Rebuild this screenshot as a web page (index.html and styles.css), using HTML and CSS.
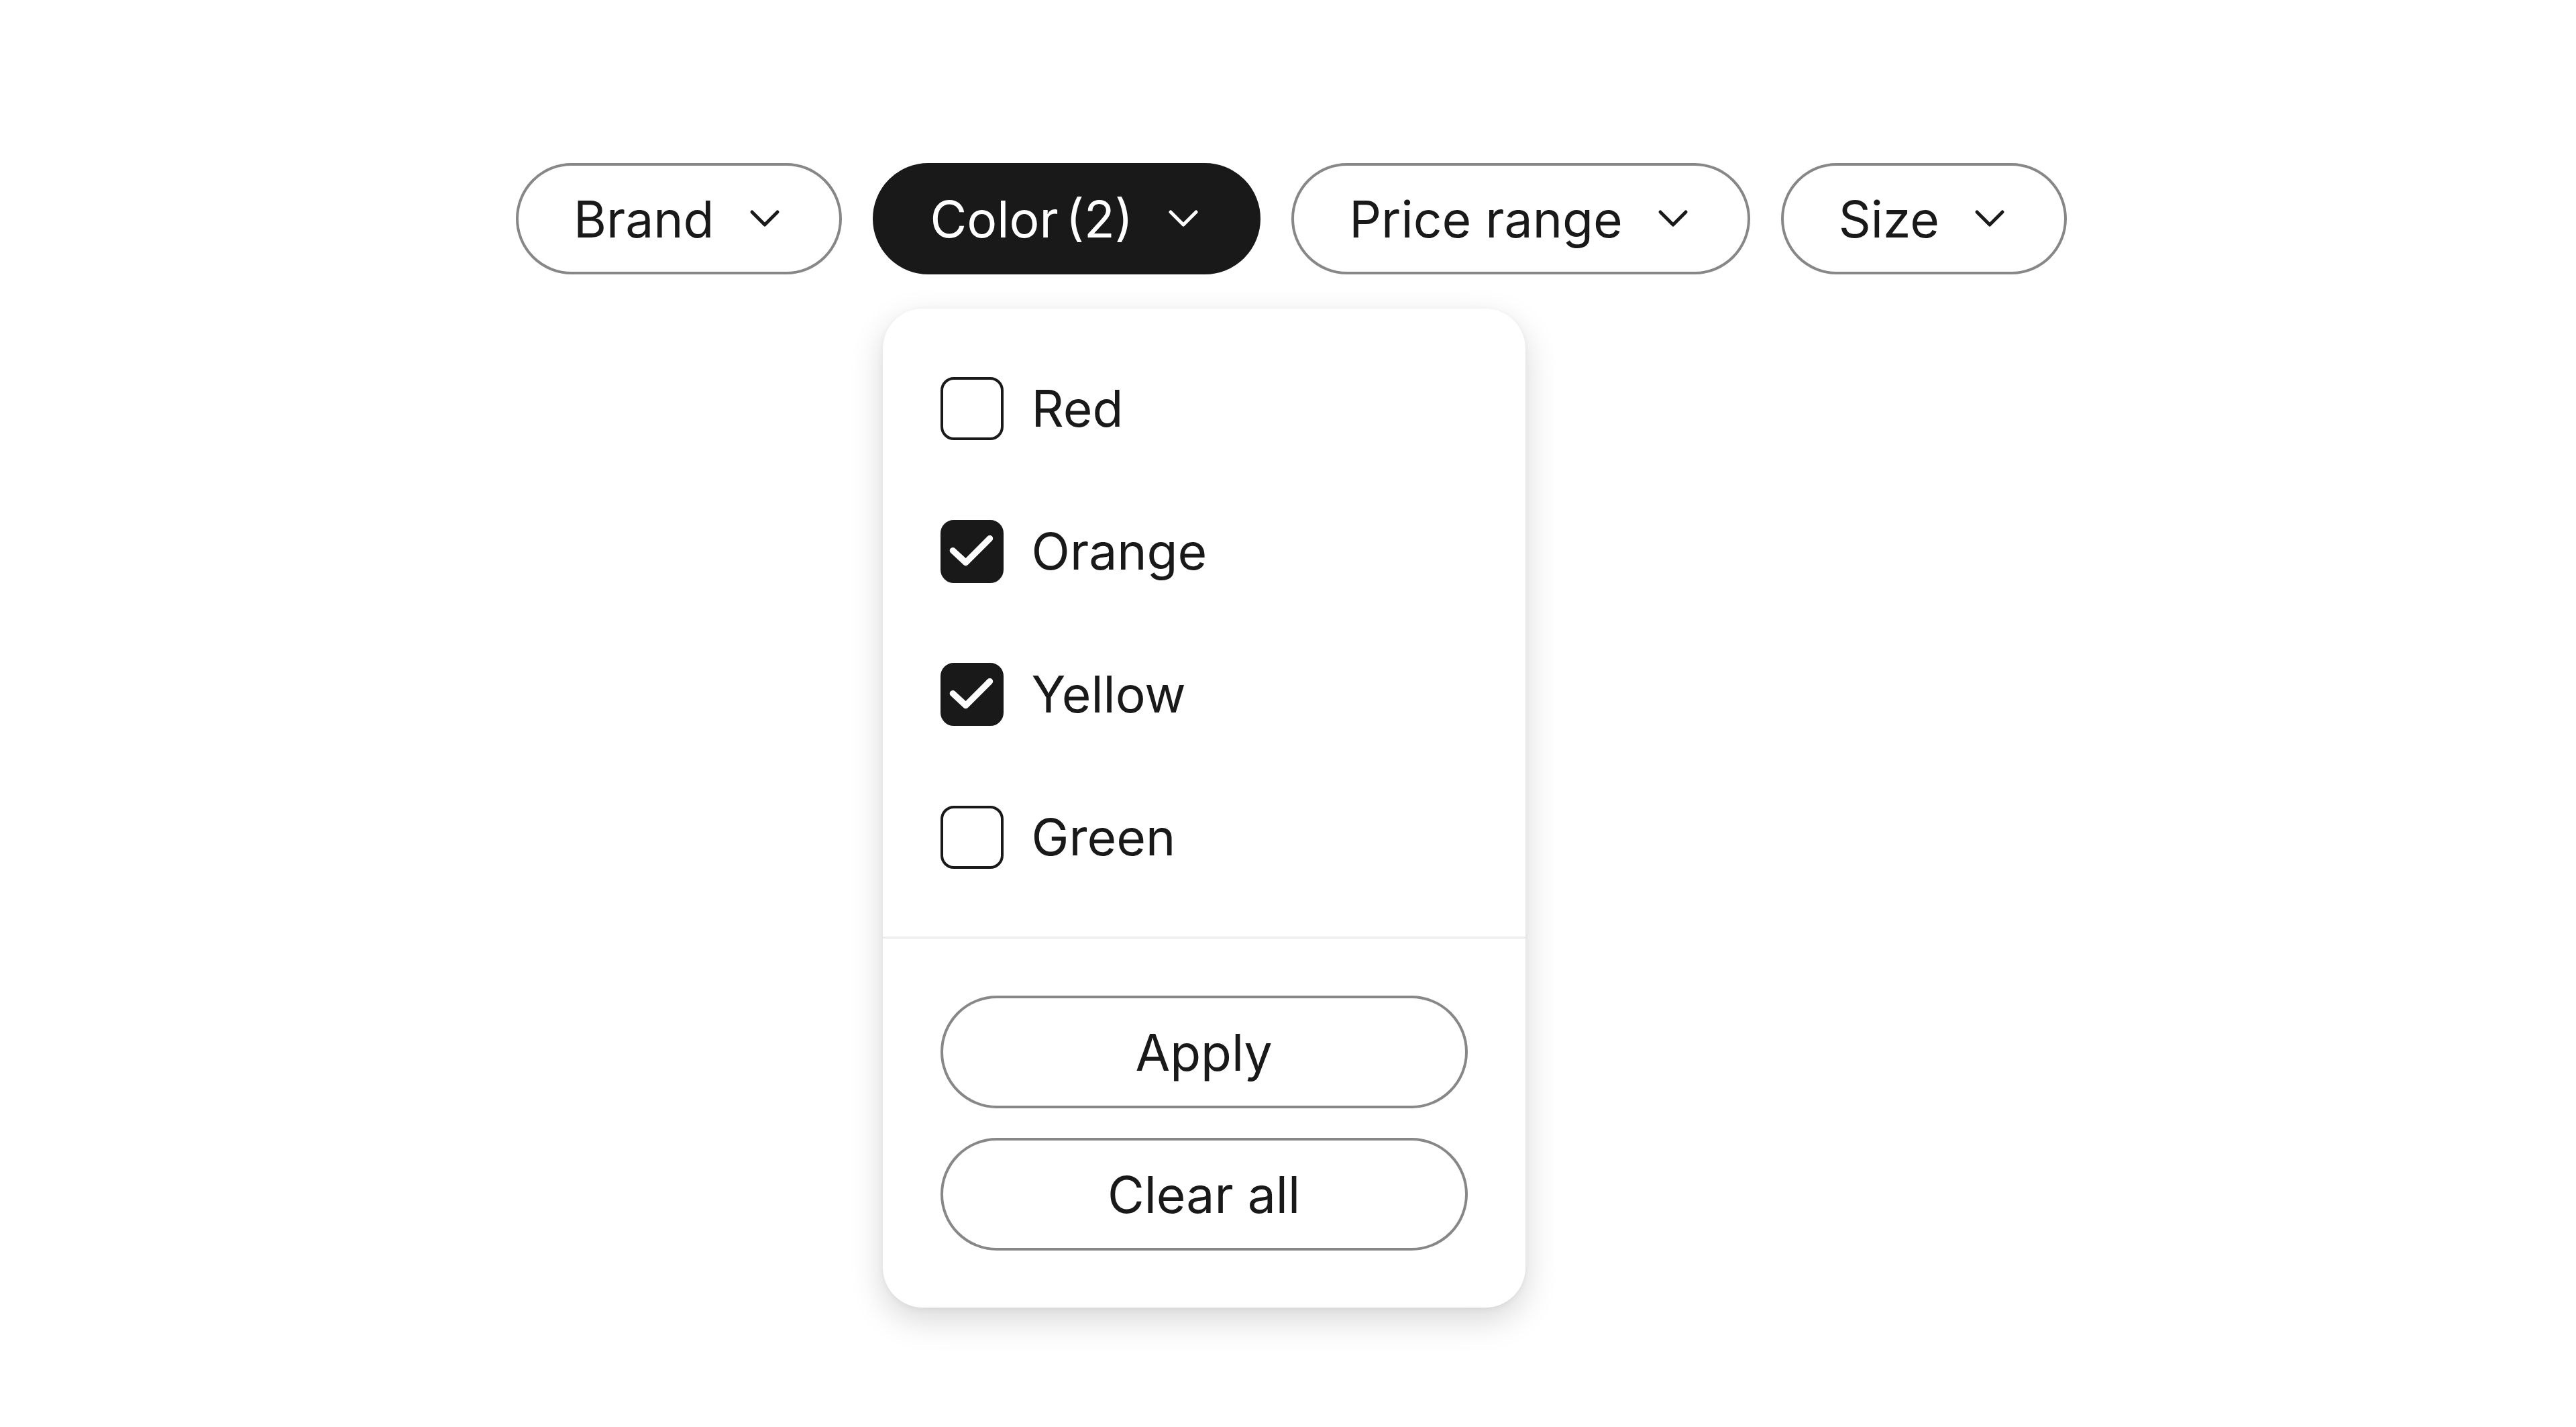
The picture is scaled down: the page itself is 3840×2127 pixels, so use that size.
FILE: index.html
```html
<!DOCTYPE html>
<html lang="en">
<head>
  <meta charset="UTF-8" />
  <meta name="viewport" content="width=device-width, initial-scale=1.0"/>
  <title>Filters</title>
  <link rel="stylesheet" href="styles.css">
</head>
<body>
  <!-- Filter pills -->
  <div class="filter-bar">
    <div class="filter">
      <button class="pill">
        <span>Brand</span>
        <svg class="chevron" viewBox="0 0 46 28"><path d="M4 4 L23 23 L42 4"/></svg>
      </button>
    </div>

    <div class="filter">
      <button class="pill pill-active">
        <span class="tight">Color (2)</span>
        <svg class="chevron" viewBox="0 0 46 28"><path d="M4 4 L23 23 L42 4"/></svg>
      </button>

      <!-- Dropdown panel -->
      <div class="dropdown">
        <div class="options">
          <label class="option">
            <span class="box"></span>
            <span class="option-label">Red</span>
          </label>
          <label class="option">
            <span class="box box-checked">
              <svg viewBox="0 0 24 24"><path d="M4 11.6 L9.4 16.6 L19.4 6.6"/></svg>
            </span>
            <span class="option-label">Orange</span>
          </label>
          <label class="option">
            <span class="box box-checked">
              <svg viewBox="0 0 24 24"><path d="M4 11.6 L9.4 16.6 L19.4 6.6"/></svg>
            </span>
            <span class="option-label">Yellow</span>
          </label>
          <label class="option">
            <span class="box"></span>
            <span class="option-label">Green</span>
          </label>
        </div>

        <div class="actions">
          <button class="action-button">Apply</button>
          <button class="action-button">Clear all</button>
        </div>
      </div>
    </div>

    <div class="filter">
      <button class="pill">
        <span>Price range</span>
        <svg class="chevron" viewBox="0 0 46 28"><path d="M4 4 L23 23 L42 4"/></svg>
      </button>
    </div>

    <div class="filter">
      <button class="pill">
        <span>Size</span>
        <svg class="chevron" viewBox="0 0 46 28"><path d="M4 4 L23 23 L42 4"/></svg>
      </button>
    </div>
  </div>
</body>
</html>
```

FILE: styles.css
```css
* {
  margin: 0;
  padding: 0;
  box-sizing: border-box;
}

body {
  font-family: 'Inter', 'Liberation Sans', sans-serif;
  background: #fff;
  color: #191919;
  min-height: 100vh;
}

.filter-bar {
  display: flex;
  justify-content: center;
  gap: 46px;
  padding: 243px 0 0 10px;
}

.filter {
  position: relative;
}

.pill {
  display: flex;
  align-items: center;
  gap: 52px;
  height: 166px;
  padding: 0 88px 0 82px;
  border: 4px solid #878787;
  border-radius: 999px;
  background: #fff;
  color: #191919;
  font-family: inherit;
  font-size: 75px;
  cursor: pointer;
}

.pill-active {
  background: #191919;
  border-color: #191919;
  color: #fff;
}

.tight {
  word-spacing: -10px;
}

.chevron {
  width: 46px;
  height: 28px;
  fill: none;
  stroke: currentColor;
  stroke-width: 5;
  stroke-linecap: round;
  stroke-linejoin: round;
}

.dropdown {
  position: absolute;
  top: calc(100% + 51px);
  left: 15px;
  width: 958px;
  background: #fff;
  border-radius: 60px;
  box-shadow: 0 18px 50px rgba(0, 0, 0, 0.16), 0 2px 10px rgba(0, 0, 0, 0.05);
  z-index: 10;
}

.options {
  padding: 42px 86px;
  border-bottom: 3px solid #ececec;
}

.option {
  display: flex;
  align-items: center;
  gap: 42px;
  height: 213px;
  font-size: 75px;
  cursor: pointer;
}

.box {
  width: 94px;
  height: 94px;
  border: 4px solid #191919;
  border-radius: 20px;
  display: flex;
  align-items: center;
  justify-content: center;
  flex-shrink: 0;
}

.box-checked {
  background: #191919;
}

.box-checked svg {
  width: 94px;
  height: 94px;
  fill: none;
  stroke: #fff;
  stroke-width: 2.6;
  stroke-linecap: round;
  stroke-linejoin: round;
}

.actions {
  display: flex;
  flex-direction: column;
  gap: 44px;
  padding: 85px 86px;
}

.action-button {
  height: 168px;
  border: 4px solid #878787;
  border-radius: 999px;
  background: #fff;
  color: #191919;
  font-family: inherit;
  font-size: 75px;
  cursor: pointer;
}
```
